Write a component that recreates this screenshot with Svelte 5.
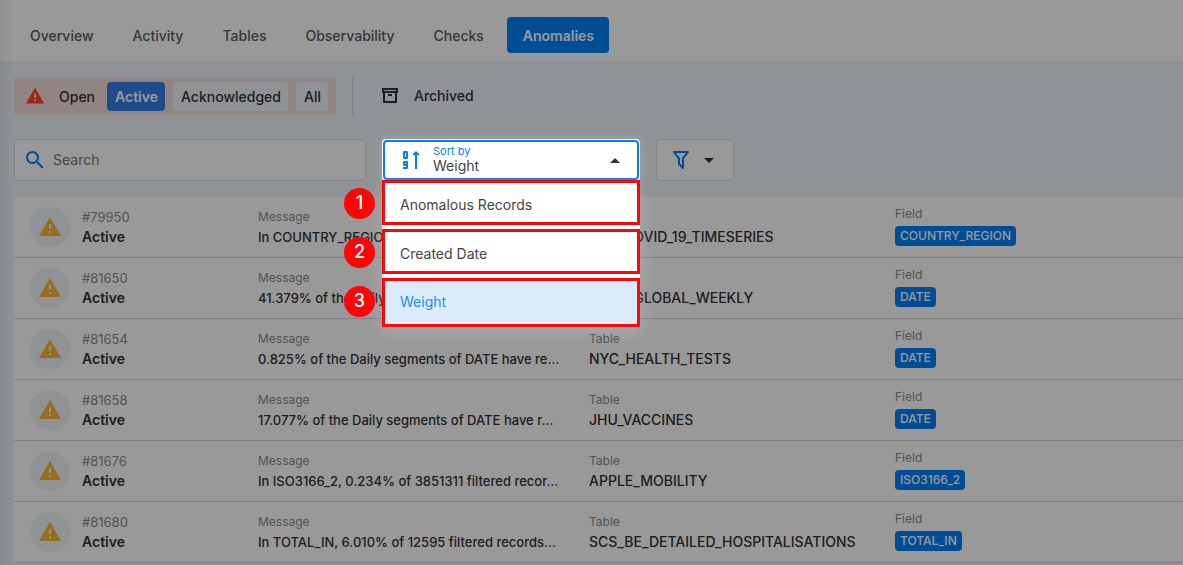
<script>
  const tabs = ['Overview', 'Activity', 'Tables', 'Observability', 'Checks', 'Anomalies'];
  const statuses = ['Active', 'Acknowledged', 'All'];
  const sortOptions = ['Anomalous Records', 'Created Date', 'Weight'];

  const anomalies = [
    { id: '#79950', message: 'In COUNTRY_REGION, 0.107% of filtered…', table: 'JHU_COVID_19_TIMESERIES', field: 'COUNTRY_REGION' },
    { id: '#81650', message: '41.379% of the Daily segments of DATE…', table: 'ECDC_GLOBAL_WEEKLY', field: 'DATE' },
    { id: '#81654', message: '0.825% of the Daily segments of DATE have re…', table: 'NYC_HEALTH_TESTS', field: 'DATE' },
    { id: '#81658', message: '17.077% of the Daily segments of DATE have r…', table: 'JHU_VACCINES', field: 'DATE' },
    { id: '#81676', message: 'In ISO3166_2, 0.234% of 3851311 filtered recor…', table: 'APPLE_MOBILITY', field: 'ISO3166_2' },
    { id: '#81680', message: 'In TOTAL_IN, 6.010% of 12595 filtered records…', table: 'SCS_BE_DETAILED_HOSPITALISATIONS', field: 'TOTAL_IN' }
  ];

  let tab = $state('Anomalies');
  let status = $state('Active');
  let sort = $state('Weight');
</script>

<div class="page">
  <nav class="tabs">
    {#each tabs as name}
      <button class="tab" class:selected={tab === name} onclick={() => (tab = name)}>{name}</button>
    {/each}
  </nav>

  <main>
    <div class="statusbar">
      <div class="open">
        <svg class="alert" width="20" height="20" viewBox="0 0 24 24"><path fill="currentColor" d="M13 14h-2V9h2m0 9h-2v-2h2M1 21h22L12 2 1 21Z" /></svg>
        <span class="open-label">Open</span>
        {#each statuses as name}
          <button class="chip" class:selected={status === name} onclick={() => (status = name)}>{name}</button>
        {/each}
      </div>
      <button class="archived">
        <svg width="18" height="20" viewBox="0 0 18 20"><path fill="none" stroke="currentColor" stroke-width="2" d="M2 3h14v3H2zM3 7v9h12V7M7 9h4" /></svg>
        Archived
      </button>
    </div>

    <div class="filters">
      <label class="search">
        <svg width="24" height="24" viewBox="0 0 24 24"><path fill="currentColor" d="M9.500 3A6.500 6.500 0 0 1 16 9.500c0 1.610-.59 3.090-1.560 4.230l.27.270h.79l5 5-1.500 1.500-5-5v-.79l-.27-.27A6.516 6.516 0 0 1 9.500 16a6.500 6.500 0 0 1 0-13m0 2C7 5 5 7 5 9.500S7 14 9.500 14 14 12 14 9.500 12 5 9.500 5Z" /></svg>
        <input type="text" placeholder="Search" aria-label="Search" />
      </label>

      <div class="sort">
        <button class="sort-field" aria-haspopup="listbox" aria-expanded="true">
          <svg class="sort-icon" width="20" height="22" viewBox="0 0 20 22">
            <path fill="none" stroke="currentColor" stroke-width="2" stroke-linejoin="round" d="M3 3h3v6H3zM6 16H3v-3h3v6H2" />
            <path fill="currentColor" d="M14 20V6h-3l4-4 4 4h-3v14z" />
          </svg>
          <span class="sort-text">
            <span class="sort-label">Sort by</span>
            <span class="sort-value">{sort}</span>
          </span>
          <svg width="24" height="24" viewBox="0 0 24 24"><path fill="#333" d="m7 15 5-5 5 5H7Z" /></svg>
        </button>
        <div class="menu" role="listbox" aria-label="Sort by">
          {#each sortOptions as option, i}
            <button class="option" class:chosen={sort === option} role="option" aria-selected={sort === option} onclick={() => (sort = option)}>
              {option}
              <span class="marker">{i + 1}</span>
            </button>
          {/each}
        </div>
      </div>

      <button class="filter" aria-label="Filter">
        <svg class="funnel" width="24" height="24" viewBox="0 0 24 24"><path fill="currentColor" d="M15 19.880c.04.300-.06.620-.29.830a.996.996 0 0 1-1.410 0L9.290 16.700a.989.989 0 0 1-.29-.83v-5.120L4.210 4.620a1 1 0 0 1 .17-1.400c.19-.14.400-.22.620-.22h14c.22 0 .430.080.620.220a1 1 0 0 1 .17 1.400L15 10.750v9.130M7.040 5 11 10.060v5.520l2 2v-7.530L16.960 5H7.040Z" /></svg>
        <svg width="24" height="24" viewBox="0 0 24 24"><path fill="#333" d="m7 10 5 5 5-5H7Z" /></svg>
      </button>
    </div>

    <ul class="list">
      {#each anomalies as row}
        <li>
          <span class="badge">
            <svg width="24" height="24" viewBox="0 0 24 24"><path fill="currentColor" d="M13 14h-2V9h2m0 9h-2v-2h2M1 21h22L12 2 1 21Z" /></svg>
          </span>
          <div class="cell"><span class="label id">{row.id}</span><strong class="state">Active</strong></div>
          <div class="cell"><span class="label">Message</span><span class="message">{row.message}</span></div>
          <div class="cell"><span class="label">Table</span><span>{row.table}</span></div>
          <div class="cell field"><span class="label">Field</span><span class="tag">{row.field}</span></div>
        </li>
      {/each}
    </ul>
  </main>
  <div class="shade"></div>
</div>

<style>
  :global(body) { background: #eef5fa; }
  .page {
    position: relative;
    height: 100vh;
    overflow: hidden;
    font: 500 14px/20px Inter, sans-serif;
    color: #333;
    background: #eef5fa;
  }
  button, input { font: inherit; color: inherit; border: 0; padding: 0; margin: 0; background: none; }
  button { cursor: pointer; }
  svg { display: block; flex: none; }

  .tabs { display: flex; gap: 8px; padding: 17px 14px 8px; background: #fff; }
  .tab { height: 36px; padding: 2px 15px 0 16px; border-radius: 4px; color: #5c5c5c; white-space: nowrap; }
  .tab.selected { background: #0080fa; color: #fff; font-weight: 600; }

  main { padding: 16px 0 0 14px; }
  .statusbar { display: flex; }
  .open { display: flex; align-items: center; gap: 8px; height: 38px; box-sizing: border-box; padding: 0 8px 0 11px; border-radius: 4px; background: #f0dedb; }
  .alert { color: #ff4619; }
  .open-label { padding: 2px 4px 0 6px; }
  .chip { height: 29px; padding: 2px 7px 0 8px; border-radius: 4px; background: #eef5fa; }
  .chip.selected { background: #347de8; color: #fff; font-weight: 600; }
  .archived { display: flex; align-items: center; gap: 15px; margin-left: 16px; padding-left: 28px; border-left: 1px solid #d3dade; }

  .filters { display: flex; margin-top: 24px; gap: 16px; }
  .search, .filter { display: flex; align-items: center; box-sizing: border-box; height: 42px; border: 1px solid #d8dce0; border-radius: 4px; background: #fff; }
  .search { flex: 0 1 352px; padding: 0 8px; gap: 6px; color: #0080fa; }
  .search input { flex: 1; min-width: 0; outline: 0; font-weight: 400; color: #333; }
  .search input::placeholder { color: #757575; opacity: 1; }
  .filter { padding: 0 12px; gap: 4px; }
  .funnel { color: #0080fa; }

  .sort { position: relative; z-index: 2; flex: 0 0 258px; height: 42px; background: #fff; border-radius: 4px; box-shadow: 0 0 12px rgba(255, 255, 255, 0.2); }
  .sort-field { display: flex; align-items: center; width: 256px; height: 40px; margin: 1px; padding: 0 10px 0 16px; box-sizing: border-box; border: 2px solid #0080fa; border-radius: 4px; text-align: left; }
  .sort-icon { color: #0080fa; }
  .sort-text { display: flex; flex: 1; flex-direction: column; padding: 0 0 2px 12px; font-weight: 400; color: #444; }
  .sort-label { font-size: 11px; line-height: 14px; color: #0080fa; }
  .sort-value { line-height: 16px; }

  .menu { position: absolute; top: 41px; left: 0; right: 0; display: flex; flex-direction: column; gap: 4px; background: #fff; box-shadow: 0 4px 16px rgba(255, 255, 255, 0.2); }
  .option { position: relative; height: 45px; padding: 4px 15px 0; border: 3px solid #f80808; font-weight: 400; text-align: left; color: #444; }
  .option.chosen { height: 49px; padding: 0 15px 2px; background: #dcebfa; color: #2090f5; }
  .marker { position: absolute; left: -41px; top: 5px; width: 31px; height: 31px; border-radius: 50%; background: #f80808; color: #fff; font: 500 18px/30px Inter, sans-serif; text-align: center; }

  .list { margin: 16px 0 0; padding: 0; list-style: none; background: #fff; border-radius: 4px 0 0; }
  li { display: grid; grid-template-columns: 40px 164px 319px 294px 1fr; column-gap: 12px; align-items: center; height: 60px; padding-left: 16px; border-bottom: 1px solid #d9d9d9; }
  .badge { display: grid; place-items: center; width: 40px; height: 40px; border-radius: 50%; background: #eef5fa; color: #fdb833; }
  .cell { display: flex; flex-direction: column; align-items: flex-start; min-width: 0; white-space: nowrap; }
  .label { font-size: 12px; font-weight: 400; color: #8c8c8c; }
  .id { font-size: 13px; }
  .state { font-weight: 600; }
  .message { font-size: 13px; }
  .field { gap: 2px; padding-bottom: 5px; }
  .tag { padding: 0 5px; border-radius: 4px; background: #0080fa; color: #fff; font-size: 12px; }

  .shade {
    position: absolute;
    inset: 0;
    z-index: 1;
    background: linear-gradient(90deg, rgba(0, 0, 40, 0.06), transparent 14px), rgba(0, 0, 0, 0.4);
    pointer-events: none;
  }
</style>
